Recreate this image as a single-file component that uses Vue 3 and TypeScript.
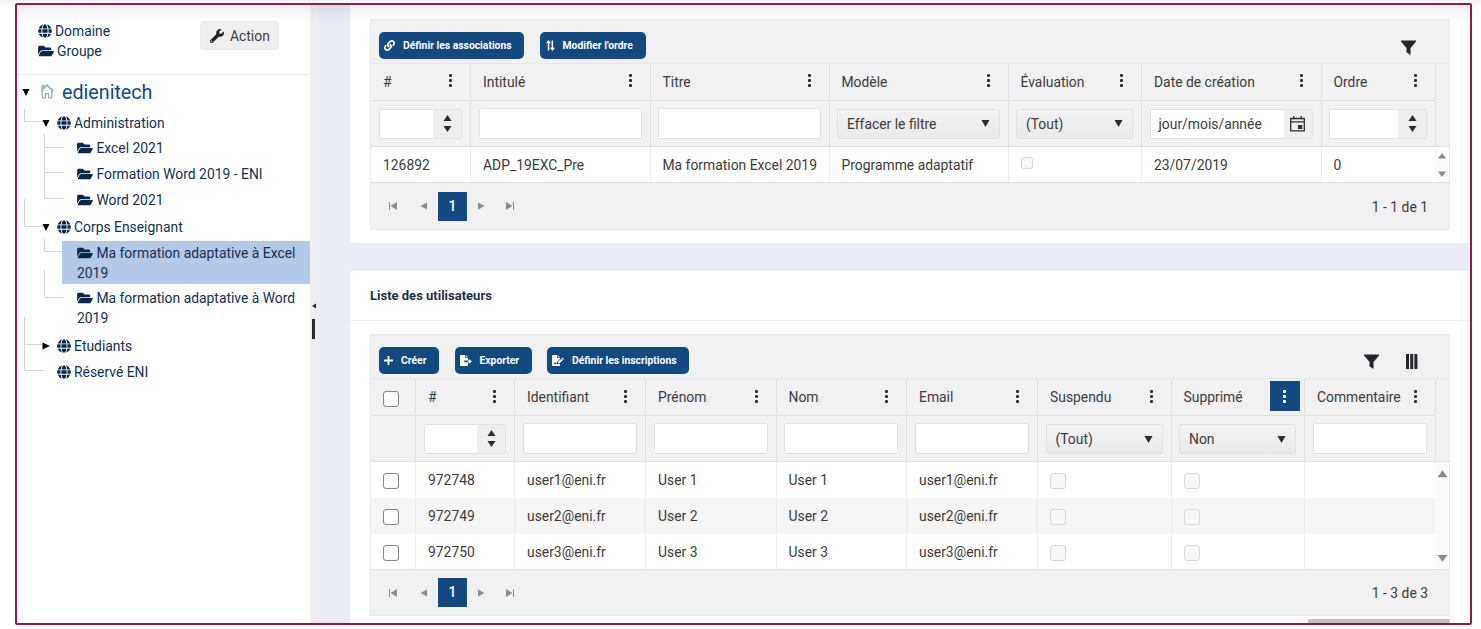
<script setup lang="ts">
type FilterKind = 'none' | 'number' | 'text' | 'select' | 'date'

interface Column {
  title: string
  filter: FilterKind
  value?: string
  active?: boolean
}

interface GridButton {
  label: string
  icon: string
  size: string
}

interface Grid {
  id: string
  buttons: GridButton[]
  columnChooser: boolean
  columns: Column[]
  rows: string[][]
  summary: string
}

interface TreeNode {
  label: string
  kind: 'root' | 'domain' | 'group'
  row: string
  arrow?: 'down' | 'right'
}

const CHECK = '[check]'
const OFF = '[off]'

const icons: Record<string, { box: string; d: string }> = {
  folder: {
    box: '0 0 576 512',
    d: 'M572.694 292.093L500.27 416.248A63.997 63.997 0 0 1 444.989 448H45.025c-18.523 0-30.064-20.093-20.731-36.093l72.424-124.155A64 64 0 0 1 152 256h399.964c18.523 0 30.064 20.093 20.73 36.093zM152 224h328v-48c0-26.51-21.49-48-48-48H272l-64-64H48C21.49 64 0 85.49 0 112v278.046l69.077-118.418C86.214 242.25 117.989 224 152 224z',
  },
  globe: {
    box: '0 0 496 512',
    d: 'M336.5 160C322 70.7 287.8 8 248 8s-74 62.7-88.5 152h177zM152 256c0 22.2 1.2 43.5 3.3 64h185.3c2.1-20.5 3.3-41.8 3.3-64s-1.2-43.5-3.3-64H155.3c-2.1 20.5-3.3 41.8-3.3 64zm324.7-96c-28.6-67.9-86.5-120.4-158-141.6 24.4 33.8 41.2 84.7 50 141.6h108zM177.2 18.4C105.8 39.6 47.8 92.1 19.3 160h108c8.7-56.9 25.5-107.8 49.9-141.6zM487.4 192H372.7c2.1 21 3.3 42.5 3.3 64s-1.2 43-3.3 64h114.6c5.5-20.5 8.6-41.8 8.6-64s-3.1-43.5-8.5-64zM120 256c0-21.5 1.2-43 3.3-64H8.6C3.2 212.5 0 233.8 0 256s3.2 43.5 8.6 64h114.6c-2-21-3.2-42.5-3.2-64zm39.5 96c14.5 89.3 48.7 152 88.5 152s74-62.7 88.5-152h-177zm159.3 141.6c71.4-21.2 129.4-73.7 158-141.6h-108c-8.8 56.9-25.6 107.8-50 141.6zM19.3 352c28.6 67.9 86.5 120.4 158 141.6-24.4-33.8-41.2-84.7-50-141.6h-108z',
  },
  wrench: {
    box: '0 0 512 512',
    d: 'M507.73 109.1c-2.24-9.03-13.54-12.09-20.12-5.51l-74.36 74.36-67.88-11.31-11.31-67.88 74.36-74.36c6.62-6.62 3.43-17.9-5.66-20.16-47.38-11.74-99.55.91-136.58 37.93-39.64 39.64-50.55 97.1-34.05 147.2L18.74 402.76c-24.99 24.99-24.99 65.51 0 90.5 24.99 24.99 65.51 24.99 90.5 0l213.21-213.21c50.12 16.71 107.47 5.68 147.37-34.22 37.07-37.07 49.7-89.32 37.91-136.73zM64 472c-13.25 0-24-10.75-24-24 0-13.26 10.75-24 24-24s24 10.74 24 24c0 13.25-10.75 24-24 24z',
  },
  link: {
    box: '0 0 512 512',
    d: 'M326.612 185.391c59.747 59.809 58.927 155.698.36 214.59-.11.12-.24.25-.36.37l-67.2 67.2c-59.27 59.27-155.699 59.262-214.96 0-59.27-59.26-59.27-155.7 0-214.96l37.106-37.106c9.84-9.84 26.786-3.3 27.294 10.606.648 17.722 3.826 35.527 9.69 52.721 1.986 5.822.567 12.262-3.783 16.612l-13.087 13.087c-28.026 28.026-28.905 73.66-1.155 101.96 28.024 28.579 74.086 28.749 102.325.51l67.2-67.19c28.191-28.191 28.073-73.757 0-101.83-3.701-3.694-7.429-6.564-10.341-8.569a16.037 16.037 0 0 1-6.947-12.606c-.396-10.567 3.348-21.456 11.698-29.806l21.054-21.055c5.521-5.521 14.182-6.199 20.584-1.731a152.482 152.482 0 0 1 20.522 17.197zM467.547 44.449c-59.261-59.262-155.69-59.27-214.96 0l-67.2 67.2c-.12.12-.25.25-.36.37-58.566 58.892-59.387 154.781.36 214.59a152.454 152.454 0 0 0 20.521 17.196c6.402 4.468 15.064 3.789 20.584-1.731l21.054-21.055c8.35-8.35 12.094-19.239 11.698-29.806a16.037 16.037 0 0 0-6.947-12.606c-2.912-2.005-6.64-4.875-10.341-8.569-28.073-28.073-28.191-73.639 0-101.83l67.2-67.19c28.239-28.239 74.3-28.069 102.325.51 27.75 28.3 26.872 73.934-1.155 101.96l-13.087 13.087c-4.35 4.35-5.769 10.79-3.783 16.612 5.864 17.194 9.042 34.999 9.69 52.721.509 13.906 17.454 20.446 27.294 10.606l37.106-37.106c59.271-59.259 59.271-155.699.001-214.959z',
  },
  order: {
    box: '0 0 10 12',
    d: 'M2 11.500V3.600H0L2.800 0l2.800 3.600H3.700v7.900zM6.200.5h1.700v7.900H10L7.200 12 4.400 8.400h1.800z',
  },
  plus: { box: '0 0 10 10', d: 'M4 0h2v4h4v2H6v4H4V6H0V4h4z' },
  exportFile: {
    box: '0 0 12 11',
    d: 'M.7 0H5v3h3v2.600H4.200v1.600H8V11H.7A.7.7 0 0 1 0 10.300V.7A.7.7 0 0 1 .7 0zM5.700 0L8 2.300H5.700zM8.800 4l3.200 2.400-3.200 2.400V7.200H8V5.600h.8z',
  },
  inscription: {
    box: '0 0 12 11',
    d: 'M.7 0H5v3h3v1L5.300 6.600 5 8.200H3.900l-.8-1.400-1.100 2.200h3.300l2.700-.2V11H.7A.7.7 0 0 1 0 10.300V.7A.7.7 0 0 1 .7 0zM5.700 0L8 2.300H5.700zM10.400 2.600L12 4.100l-.9.900-1.600-1.500zM9 3.900l1.600 1.500-2.900 2.700-1.700.2.200-1.700z',
  },
  funnel: { box: '0 0 15 15', d: 'M0 .5h15v1L9.500 8v7L5.500 12.200V8L0 1.500z' },
  columns: { box: '0 0 12 15', d: 'M0 0h3v15H0zM4.200 0h3v15h-3zM8.400 0h3v15h-3z' },
}

const tree: TreeNode[] = [
  { label: 'edienitech', kind: 'root', row: 'r34', arrow: 'down' },
  { label: 'Administration', kind: 'domain', row: 'r27', arrow: 'down' },
  { label: 'Excel 2021', kind: 'group', row: 'r24' },
  { label: 'Formation Word 2019 - ENI', kind: 'group', row: 'r27' },
  { label: 'Word 2021', kind: 'group', row: 'r25' },
  { label: 'Corps Enseignant', kind: 'domain', row: 'r29', arrow: 'down' },
  { label: 'Ma formation adaptative à Excel 2019', kind: 'group', row: 'wrap selected' },
  { label: 'Ma formation adaptative à Word 2019', kind: 'group', row: 'wrap spaced' },
  { label: 'Etudiants', kind: 'domain', row: 'r28', arrow: 'right' },
  { label: 'Réservé ENI', kind: 'domain', row: 'r24' },
]

const programGrid: Grid = {
  id: 'programs',
  buttons: [
    { label: 'Définir les associations', icon: 'link', size: 'w145' },
    { label: "Modifier l'ordre", icon: 'order', size: 'w107' },
  ],
  columnChooser: false,
  columns: [
    { title: '#', filter: 'number' },
    { title: 'Intitulé', filter: 'text' },
    { title: 'Titre', filter: 'text' },
    { title: 'Modèle', filter: 'select', value: 'Effacer le filtre' },
    { title: 'Évaluation', filter: 'select', value: '(Tout)' },
    { title: 'Date de création', filter: 'date', value: 'jour/mois/année' },
    { title: 'Ordre', filter: 'number' },
  ],
  rows: [['126892', 'ADP_19EXC_Pre', 'Ma formation Excel 2019', 'Programme adaptatif', OFF, '23/07/2019', '0']],
  summary: '1 - 1 de 1',
}

const userGrid: Grid = {
  id: 'users',
  buttons: [
    { label: 'Créer', icon: 'plus', size: 'w60' },
    { label: 'Exporter', icon: 'exportFile', size: 'w77' },
    { label: 'Définir les inscriptions', icon: 'inscription', size: 'w142' },
  ],
  columnChooser: true,
  columns: [
    { title: CHECK, filter: 'none' },
    { title: '#', filter: 'number' },
    { title: 'Identifiant', filter: 'text' },
    { title: 'Prénom', filter: 'text' },
    { title: 'Nom', filter: 'text' },
    { title: 'Email', filter: 'text' },
    { title: 'Suspendu', filter: 'select', value: '(Tout)' },
    { title: 'Supprimé', filter: 'select', value: 'Non', active: true },
    { title: 'Commentaire', filter: 'text' },
  ],
  rows: [1, 2, 3].map((n) => [
    CHECK,
    String(972747 + n),
    `user${n}@eni.fr`,
    `User ${n}`,
    `User ${n}`,
    `user${n}@eni.fr`,
    OFF,
    OFF,
    '',
  ]),
  summary: '1 - 3 de 3',
}

const cards = [
  { title: '', grid: programGrid },
  { title: 'Liste des utilisateurs', grid: userGrid },
]
</script>

<template>
  <div class="page">
    <div class="frame">
      <aside class="sidebar">
        <div class="legend">
          <div class="legend-list">
            <div class="legend-item">
              <svg class="i-globe" :viewBox="icons.globe.box"><path :d="icons.globe.d" /></svg>
              <span>Domaine</span>
            </div>
            <div class="legend-item">
              <svg class="i-folder" :viewBox="icons.folder.box"><path :d="icons.folder.d" /></svg>
              <span>Groupe</span>
            </div>
          </div>
          <button class="action">
            <svg class="i-wrench" :viewBox="icons.wrench.box"><path :d="icons.wrench.d" /></svg>
            <span>Action</span>
          </button>
        </div>
        <div class="tree">
          <!-- connector lines behind the nodes -->
          <svg class="connectors" viewBox="0 0 60 320">
            <path
              d="M7.500 34v12.500H27M27.500 59v64.500H47M27.500 72.500H47M27.500 97.500H47M7.500 124v27.500H27M27.500 164v12.500H45M27.500 195v27.500H47M7.500 242v53.500H27M7.500 269.500H27"
            />
          </svg>
          <div v-for="node in tree" :key="node.label" class="node" :class="[node.kind, node.row]">
            <svg v-if="node.kind !== 'group'" class="arrow" viewBox="0 0 8 8">
              <path v-if="node.arrow === 'down'" d="M.5 1h7L4 8z" />
              <path v-else-if="node.arrow === 'right'" d="M.5.500v7L8 4z" />
            </svg>
            <svg v-if="node.kind === 'root'" class="i-house" viewBox="0 0 14 15">
              <path d="M1 7.300L7 1.600l6 5.700M2.200 6.500v7.400h3.100V9.600h3.400v4.300h3.100V6.500M2.200 5V1.300h1.700v2M1 6.300L7 .7l6 5.600" />
            </svg>
            <svg v-else-if="node.kind === 'domain'" class="i-globe" :viewBox="icons.globe.box">
              <path :d="icons.globe.d" />
            </svg>
            <div class="node-label">
              <svg v-if="node.kind === 'group'" class="i-folder" :viewBox="icons.folder.box">
                <path :d="icons.folder.d" />
              </svg>
              {{ node.label }}
            </div>
          </div>
        </div>
      </aside>

      <div class="splitter">
        <svg viewBox="0 0 4 6"><path d="M4 0.500v5L0 3z" /></svg>
        <i></i>
      </div>

      <main class="content">
        <section v-for="card in cards" :key="card.grid.id" class="card" :class="card.grid.id">
          <h2 v-if="card.title" class="card-title">{{ card.title }}</h2>
          <div class="grid">
            <div class="toolbar">
              <button v-for="b in card.grid.buttons" :key="b.label" class="btn" :class="b.size">
                <svg :class="'b-' + b.icon" :viewBox="icons[b.icon].box"><path :d="icons[b.icon].d" /></svg>
                <span>{{ b.label }}</span>
              </button>
              <div class="tools">
                <svg class="t-funnel" :viewBox="icons.funnel.box"><path :d="icons.funnel.d" /></svg>
                <svg v-if="card.grid.columnChooser" class="t-columns" :viewBox="icons.columns.box">
                  <path :d="icons.columns.d" />
                </svg>
              </div>
            </div>

            <div class="row head">
              <div v-for="c in card.grid.columns" :key="c.title" class="cell">
                <i v-if="c.title === CHECK" class="check"></i>
                <template v-else>
                  <span>{{ c.title }}</span>
                  <span class="menu" :class="{ active: c.active }"><i></i><i></i><i></i></span>
                </template>
              </div>
              <div class="gutter"></div>
            </div>

            <div class="row filters">
              <div v-for="c in card.grid.columns" :key="c.title" class="cell">
                <div v-if="c.filter === 'text'" class="field"></div>
                <div v-else-if="c.filter === 'select'" class="field select">
                  <span>{{ c.value }}</span>
                  <svg viewBox="0 0 8 7"><path d="M0 0h8L4 7z" /></svg>
                </div>
                <div v-else-if="c.filter === 'number'" class="field addon">
                  <span></span>
                  <b class="spin">
                    <svg viewBox="0 0 8 6"><path d="M4 0l4 6H0z" /></svg>
                    <svg viewBox="0 0 8 6"><path d="M0 0h8L4 6z" /></svg>
                  </b>
                </div>
                <div v-else-if="c.filter === 'date'" class="field addon">
                  <span>{{ c.value }}</span>
                  <b>
                    <svg class="calendar" viewBox="0 0 15 16">
                      <path class="line" d="M.7 2.500h13.600v12.300H.7zM.7 5.800h13.600M3.800 0v3.600M11.200 0v3.600" />
                      <path d="M8 9h4.300v4H8z" />
                    </svg>
                  </b>
                </div>
              </div>
              <div class="gutter"></div>
            </div>

            <div class="body">
              <div class="rows">
                <div v-for="(r, ri) in card.grid.rows" :key="ri" class="row data">
                  <div v-for="(v, ci) in r" :key="ci" class="cell">
                    <i v-if="v === CHECK" class="check"></i>
                    <i v-else-if="v === OFF" class="check off"></i>
                    <span v-else>{{ v }}</span>
                  </div>
                </div>
              </div>
              <div class="scroll">
                <svg viewBox="0 0 10 8"><path d="M5 1l4 5.500H1z" /></svg>
                <svg viewBox="0 0 10 8"><path d="M1 1.500h8L5 7z" /></svg>
              </div>
            </div>

            <div class="pager">
              <svg viewBox="0 0 8 8"><path d="M0 0h1v8H0zM8 0v8L1.500 4z" /></svg>
              <svg viewBox="0 0 8 8"><path d="M7 .5v7L.5 4z" /></svg>
              <b>1</b>
              <svg viewBox="0 0 8 8"><path d="M1 .5v7L7.500 4z" /></svg>
              <svg viewBox="0 0 8 8"><path d="M7 0h1v8H7zM0 0v8L6.500 4z" /></svg>
              <span>{{ card.grid.summary }}</span>
            </div>
          </div>
          <div v-if="card.title" class="hscroll"></div>
        </section>
      </main>
      <div class="top-shadow"></div>
    </div>
  </div>
</template>

<style>
html,
body {
  margin: 0;
  background: #fff;
  overflow: hidden;
}
</style>

<style scoped>
.page {
  box-sizing: border-box;
  width: 1481px;
  height: 629px;
  padding: 3px 0 0 15px;
  background: linear-gradient(#f4f4f5, #fff 8px);
  font-family: Roboto, "Liberation Sans", sans-serif;
  font-size: 13.880px;
  color: #3b3b3b;
}
.page *,
.page *::before {
  box-sizing: border-box;
}
.frame {
  position: relative;
  display: flex;
  width: 1457px;
  height: 622px;
  border: 2px solid #921b4d;
  border-radius: 2px;
  overflow: hidden;
  background: #fff;
}
.top-shadow {
  position: absolute;
  inset: 0 0 auto 0;
  height: 17px;
  background: linear-gradient(rgba(40, 45, 60, 0.08), rgba(40, 45, 60, 0));
}
svg {
  display: block;
  flex: none;
  fill: currentColor;
}
button {
  border: 0;
  padding: 0;
  font: inherit;
}
i {
  display: block;
}

/* sidebar */
.sidebar {
  width: 293px;
  color: #12304f;
}
.legend {
  display: flex;
  justify-content: space-between;
  height: 70px;
  padding: 16px 31px 0 21px;
  border-bottom: 1px solid #ececee;
}
.legend-item {
  display: flex;
  align-items: center;
  height: 20px;
  gap: 3px;
}
.i-globe {
  width: 14px;
  height: 14px;
  color: #08274a;
}
.i-folder {
  width: 16px;
  height: 14px;
  color: #08274a;
}
.action {
  display: flex;
  align-items: center;
  width: 79px;
  height: 29px;
  padding-left: 9px;
  gap: 6px;
  border-radius: 4px;
  background: #efefef;
  border: 1px solid #eaeaea;
  color: #3d3d3d;
}
.i-wrench {
  width: 14px;
  height: 14px;
  color: #222;
}
.tree {
  position: relative;
}
.connectors {
  position: absolute;
  top: 0;
  left: 0;
  width: 60px;
  height: 320px;
}
.connectors path {
  fill: none;
  stroke: #d6d6d6;
}
.node {
  position: relative;
  display: flex;
  align-items: center;
}
.r24 { height: 24px; }
.r25 { height: 25px; }
.r27 { height: 27px; }
.r28 { height: 28px; margin-top: 3px; }
.r29 { height: 29px; }
.r34 { height: 34px; }
.arrow {
  width: 8px;
  height: 8px;
  color: #000;
}
.root {
  padding-left: 5px;
  font-size: 19.700px;
  color: #134a80;
}
.i-house {
  width: 14px;
  height: 15px;
  margin: 0 8px 2px 10px;
}
.i-house path {
  fill: none;
  stroke: #7795b5;
}
.domain {
  padding-left: 25px;
}
.domain .i-globe {
  margin: 0 3px 0 7px;
}
.group {
  margin-left: 45px;
  padding-left: 15px;
}
.group .i-folder {
  display: inline-block;
  vertical-align: -2px;
}
.node-label {
  padding-top: 2px;
  line-height: 19.500px;
}
.wrap {
  height: 43px;
  padding-right: 6px;
}
.selected {
  background: #b4c8e7;
}
.spaced {
  margin-top: 2px;
}

/* splitter */
.splitter {
  width: 7px;
  background: #eeeeee;
  padding: 298px 0 0 2px;
  color: #222;
}
.splitter svg {
  width: 4px;
  height: 6px;
}
.splitter i {
  width: 3px;
  height: 20px;
  margin-top: 10px;
  background: #2b2b2b;
}

/* content */
.content {
  flex: 1;
  padding-left: 33px;
  background: #e9ecf5;
}
.card {
  background: #fff;
}
.card.programs {
  height: 238px;
  padding: 14px 20px 0;
  border-radius: 0 0 0 4px;
}
.card.users {
  height: 352px;
  margin-top: 28px;
  padding: 0 20px;
  border-radius: 4px 0 0 0;
}
.card-title {
  height: 50px;
  margin: 0 -20px 13px;
  padding-left: 20px;
  border-bottom: 1px solid #eef1f5;
  font-size: 13px;
  line-height: 50px;
  font-weight: 700;
  color: #1c2f4a;
}
.hscroll {
  width: 142px;
  height: 4px;
  margin: 3px 0 0 auto;
  background: #c3c3c3;
}

/* grid */
.grid {
  width: 1080px;
  border: 1px solid #e9e9e9;
  background: #f1f1f1;
}
.toolbar {
  display: flex;
  align-items: flex-start;
  height: 44px;
  padding: 12px 34px 0 8px;
  border-bottom: 1px solid #e8e8e8;
}
.users .toolbar {
  padding-right: 32px;
}
.btn {
  display: flex;
  align-items: center;
  height: 27px;
  margin-right: 15.500px;
  padding-left: 5px;
  border-radius: 5px;
  background: #13497e;
  color: #fff;
  font-size: 10.350px;
  font-weight: 700;
  white-space: nowrap;
}
.w145 { width: 145px; }
.w107 { width: 106.500px; }
.w60 { width: 60px; }
.w77 { width: 77px; }
.w142 { width: 142px; }
.b-link { width: 11px; height: 11px; margin-right: 8px; }
.b-order { width: 9px; height: 11px; margin: 0 8px 0 1px; }
.b-plus { width: 9px; height: 9px; margin-right: 8px; }
.b-exportFile { width: 12px; height: 11px; margin-right: 8px; }
.b-inscription { width: 12px; height: 11px; margin-right: 8px; }
.tools {
  display: flex;
  gap: 27px;
  margin: 7px -1px 0 auto;
  color: #24262a;
}
.programs .tools {
  margin-top: 8px;
}
.t-funnel { width: 15px; height: 15px; }
.t-columns { width: 12px; height: 15px; }
.row {
  display: grid;
}
.programs .row {
  grid-template-columns: 100px 179.500px 179px 179px 133.500px 179.500px 114.500px 13px;
}
.users .row {
  grid-template-columns: 45px 99px 131px 130.500px 130.500px 131px 133.500px 133.500px 131px 13px;
}
.programs .data {
  grid-template-columns: 100px 179.500px 179px 179px 133.500px 179.500px 113.500px;
}
.users .data {
  grid-template-columns: 45px 99px 131px 130.500px 130.500px 131px 133.500px 133.500px 130px;
}
.cell {
  display: flex;
  align-items: center;
  min-width: 0;
  padding-left: 12px;
  border-right: 1px solid #e0e0e0;
  white-space: nowrap;
}
.head {
  height: 37px;
}
.head .cell {
  justify-content: space-between;
  border-bottom: 1px solid #e0e0e0;
}
.menu {
  display: flex;
  flex-direction: column;
  align-items: center;
  justify-content: center;
  flex: none;
  gap: 2px;
  width: 30px;
  height: 29px;
  margin: 0 4.500px 3px 0;
}
.users .menu {
  margin-bottom: 2px;
}
.menu i {
  width: 3px;
  height: 3px;
  border-radius: 1px;
  background: #2f2f2f;
}
.menu.active {
  height: 30px;
  background: #13497e;
}
.menu.active i {
  background: #fff;
}
.filters {
  height: 46px;
  border-bottom: 1px solid #e0e0e0;
}
.filters .cell {
  align-items: flex-start;
  padding: 7px 8px 0 7.500px;
}
.filters .cell:first-child,
.users .filters .cell:nth-child(2) {
  padding-left: 8px;
}
.field {
  display: flex;
  align-items: center;
  flex: 1;
  height: 31px;
  border: 1px solid #e2e2e2;
  border-radius: 2px;
  background: #fff;
}
.select {
  justify-content: space-between;
  height: 30px;
  margin-top: 0.500px;
  padding: 0 9px 0 9px;
  background: linear-gradient(#f2f2f2, #eaeaea);
}
.users .select {
  padding-top: 1px;
}
.select svg {
  width: 9px;
  height: 7px;
  color: #2d2d2d;
}
.addon {
  height: 30px;
  margin-top: 0.500px;
  justify-content: space-between;
}
.addon span {
  padding-left: 8px;
}
.addon b {
  display: flex;
  align-items: center;
  justify-content: center;
  width: 28px;
  height: 100%;
  background: #eeeeee;
  color: #2d2d2d;
}
.spin {
  flex-direction: column;
  gap: 5px;
}
.spin svg {
  width: 9px;
  height: 6px;
}
.calendar {
  width: 15px;
  height: 16px;
}
.calendar .line {
  fill: none;
  stroke: currentColor;
  stroke-width: 1.300;
}
.body {
  display: flex;
  background: #fff;
  border-bottom: 1px solid #dedede;
}
.data {
  height: 36px;
}
.programs .data,
.users .data:last-child {
  height: 35px;
}
.data:nth-child(even) {
  background: #f5f5f5;
}
.data .cell {
  border-color: #ebebeb;
}
.data .cell:last-child {
  border: 0;
}
.check {
  width: 16px;
  height: 16px;
  border: 1px solid #848484;
  border-radius: 3px;
  background: #fff;
  margin-top: 2px;
}
.head .check {
  margin-top: 4px;
}
.check.off {
  border-color: #d6d6d6;
  background: #f7f7f7;
}
.programs .check {
  width: 12px;
  height: 12px;
  margin: -3px 0 0;
}
.scroll {
  display: flex;
  flex-direction: column;
  justify-content: space-between;
  align-items: center;
  width: 14px;
  padding: 7px 0 6px;
  background: #fbfbfb;
  color: #8b8b8b;
}
.scroll svg {
  width: 10px;
  height: 8px;
}
.users .scroll svg {
  width: 13px;
  height: 10px;
}
.programs .scroll {
  padding: 5px 0 4px;
}
.pager {
  display: flex;
  align-items: center;
  height: 46px;
  padding: 0 21px 0 18px;
  color: #8b8b8b;
}
.users .pager {
  height: 45px;
}
.pager svg {
  width: 8px;
  height: 8px;
}
.pager svg:nth-child(2) {
  margin: 0 10px 0 23px;
}
.pager b {
  width: 29px;
  height: 29px;
  background: #13497e;
  color: #fff;
  font-weight: 500;
  line-height: 28px;
  text-align: center;
}
.pager svg:nth-child(4) {
  margin: 0 21px 0 10px;
}
.pager span {
  margin-left: auto;
  padding-top: 1px;
  color: #3b3b3b;
}
</style>
